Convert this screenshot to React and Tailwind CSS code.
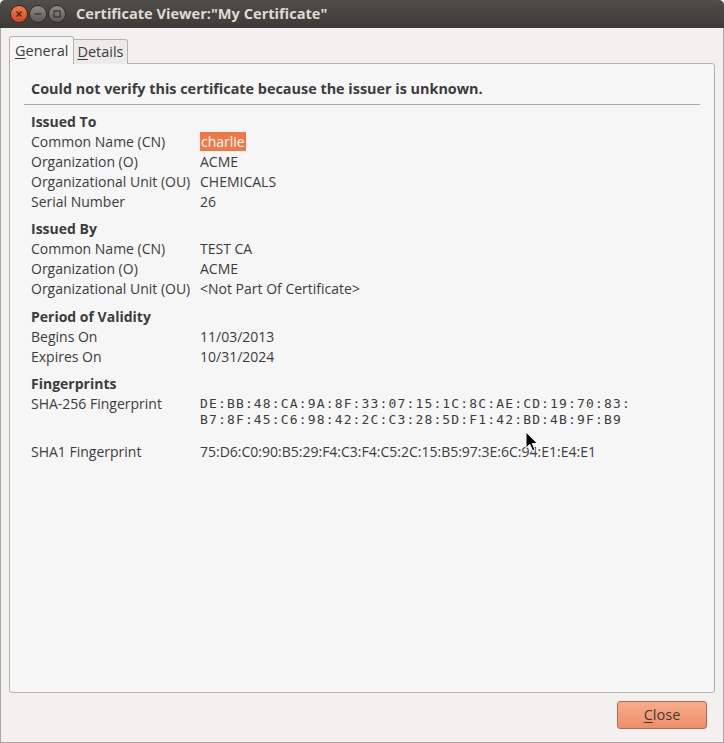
import React from 'react';

const sans = { fontFamily: '"Open Sans", "DejaVu Sans", sans-serif' };

const Row = ({ label, children }) => (
    <div className="flex h-5 items-center">
        <span className="w-[169px] shrink-0">{label}</span>
        <span>{children}</span>
    </div>
);

const Section = ({ title, children }) => (
    <div className="mb-[7.6px]">
        <div className="flex h-5 items-center font-bold">{title}</div>
        {children}
    </div>
);

const TitleButton = ({ kind }) => {
    if (kind === 'close') {
        return (
            <div className="w-[18px] h-[18px] rounded-full bg-gradient-to-b from-[#f37a4d] to-[#d9471a] border border-[#3a2a22] flex items-center justify-center">
                <svg width="8" height="8" viewBox="0 0 8 8"><path d="M1.5 1.5 L6.5 6.5 M6.5 1.5 L1.5 6.5" stroke="#3b2a20" strokeWidth="1.4" /></svg>
            </div>
        );
    }
    return (
        <div className="w-[18px] h-[18px] rounded-full bg-gradient-to-b from-[#8c8a84] to-[#5c5b56] border border-[#2e2d2a] flex items-center justify-center">
            {kind === 'min'
                ? <svg width="8" height="8" viewBox="0 0 8 8"><path d="M0.5 4 H7.5" stroke="#3a3936" strokeWidth="1.4" /></svg>
                : <svg width="8" height="8" viewBox="0 0 8 8"><rect x="1" y="1" width="6" height="6" fill="none" stroke="#3a3936" strokeWidth="1.3" /></svg>}
        </div>
    );
};

export default function App() {
    return (
        <div className="w-[724px] h-[743px] relative flex flex-col bg-[#f2f1f0] text-[14px] text-[#3c3c3c] overflow-hidden" style={sans}>
            {/* title bar */}
            <div className="h-[28px] shrink-0 flex items-center bg-gradient-to-b from-[#4f4e49] to-[#3c3b37] rounded-t-[5px] pl-[10px]">
                <div className="flex gap-[1px]">
                    <TitleButton kind="close" />
                    <TitleButton kind="min" />
                    <TitleButton kind="max" />
                </div>
                <span className="ml-[10px] font-bold text-[14.6px] text-[#dfdbd2]">Certificate Viewer:"My Certificate"</span>
            </div>

            <div className="flex-1 flex flex-col border-x border-b border-[#a8a7a3] px-[8px] pt-[8px]">
                {/* tabs */}
                <div className="flex items-end h-[28px] relative z-10">
                    <div className="h-[28px] px-[5px] flex items-center bg-[#f6f6f6] border border-b-0 border-[#b5b3ae] rounded-t-[3px] text-[14.5px]">
                        <span><span className="underline underline-offset-2">G</span>eneral</span>
                    </div>
                    <div className="h-[25px] px-[3px] flex items-center bg-[#ecebe9] border border-l-0 border-b-0 border-[#b5b3ae] rounded-tr-[3px] text-[14.5px]">
                        <span><span className="underline underline-offset-2">D</span>etails</span>
                    </div>
                </div>

                {/* notebook page */}
                <div className="h-[630px] -mt-px bg-[#f6f6f6] border border-[#b5b3ae] rounded-b-[3px] rounded-tr-[3px] px-[14px] pt-[12px]">
                    <div className="px-[7px] h-[26px] flex items-center font-bold text-[14.4px]">
                        Could not verify this certificate because the issuer is unknown.
                    </div>
                    <div className="h-px bg-[#a9a9a7] mt-[2px] mb-[6px]" />

                    <div className="px-[7px]">
                        <Section title="Issued To">
                            <Row label="Common Name (CN)">
                                <span className="bg-[#f07746] text-white px-px">charlie</span>
                            </Row>
                            <Row label="Organization (O)">ACME</Row>
                            <Row label="Organizational Unit (OU)">CHEMICALS</Row>
                            <Row label="Serial Number">26</Row>
                        </Section>

                        <Section title="Issued By">
                            <Row label="Common Name (CN)">TEST CA</Row>
                            <Row label="Organization (O)">ACME</Row>
                            <Row label="Organizational Unit (OU)">&lt;Not Part Of Certificate&gt;</Row>
                        </Section>

                        <Section title="Period of Validity">
                            <Row label="Begins On">11/03/2013</Row>
                            <Row label="Expires On">10/31/2024</Row>
                        </Section>

                        <Section title="Fingerprints">
                            <div className="flex mb-[14px]">
                                <span className="w-[169px] shrink-0 h-5 flex items-center">SHA-256 Fingerprint</span>
                                <div className="text-[13px] tracking-[1.15px] leading-[16px] pt-[2px]" style={{ fontFamily: '"DejaVu Sans Mono", monospace' }}>
                                    <div>DE:BB:48:CA:9A:8F:33:07:15:1C:8C:AE:CD:19:70:83:</div>
                                    <div>B7:8F:45:C6:98:42:2C:C3:28:5D:F1:42:BD:4B:9F:B9</div>
                                </div>
                            </div>
                            <Row label="SHA1 Fingerprint">75:D6:C0:90:B5:29:F4:C3:F4:C5:2C:15:B5:97:3E:6C:94:E1:E4:E1</Row>
                        </Section>
                    </div>
                </div>

                {/* button bar */}
                <div className="flex justify-end pt-[8px] pr-[8px]">
                    <button className="w-[90px] h-[28px] rounded-[3px] border border-[#b06c54] bg-gradient-to-b from-[#f9ac8c] to-[#ef8d69] text-[14.5px] text-[#3c3c3c]">
                        <span className="underline underline-offset-2">C</span>lose
                    </button>
                </div>
            </div>

            {/* mouse pointer */}
            <svg className="absolute left-[525px] top-[431px]" width="14" height="22" viewBox="0 0 14 22">
                <path d="M1 1 L1 17 L4.8 13.4 L7.6 19.8 L10 18.8 L7.3 12.6 L12.4 12.6 Z" fill="#000" stroke="#fff" strokeWidth="1" />
            </svg>
        </div>
    );
}
